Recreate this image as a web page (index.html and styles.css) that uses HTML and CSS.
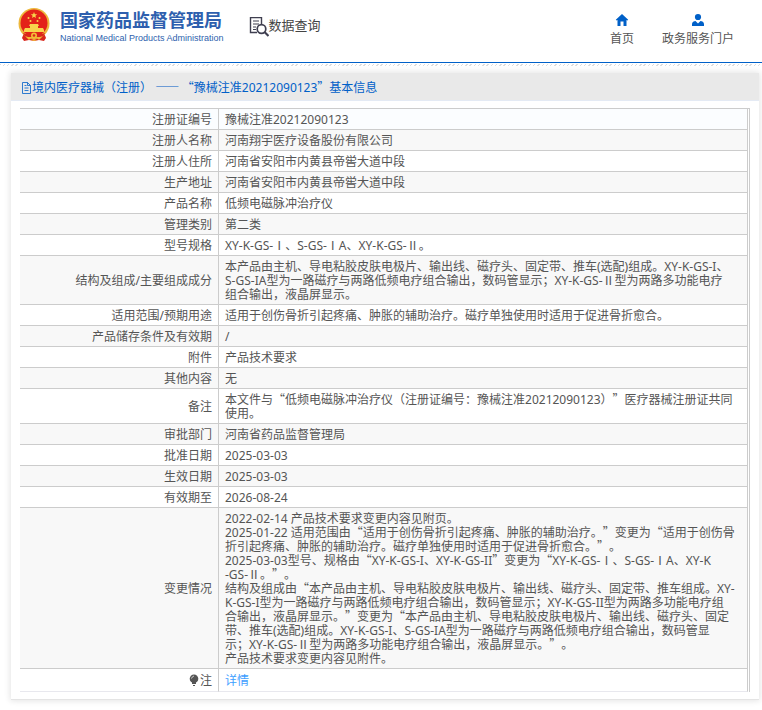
FILE: index.html
```html
<!DOCTYPE html>
<html lang="zh-CN">
<head>
<meta charset="utf-8">
<meta name="viewport" content="width=device-width, initial-scale=1">
<title>国家药品监督管理局 数据查询</title>
<link rel="stylesheet" href="styles.css">
</head>
<body>
<header class="site-header">
  <a class="brand" href="#">
    <svg class="emblem" viewBox="0 0 32 34" aria-hidden="true">
      <path d="M6 25 4 30l2 3 5-1 5 1 5-1 5 1 2-3-2-5z" fill="#d9271c"/>
      <circle cx="16" cy="15.500" r="15.500" fill="#edb83c"/>
      <circle cx="16" cy="15" r="13.500" fill="#e32119"/>
      <path d="m16 4 .9 2.200 2.300.1-1.800 1.500.6 2.300-2-1.300-2 1.300.6-2.300-1.800-1.500 2.300-.1z" fill="#f8d44c"/>
      <circle cx="10.500" cy="10" r="1" fill="#f8d44c"/><circle cx="21.500" cy="10" r="1" fill="#f8d44c"/>
      <circle cx="12.500" cy="13" r="1" fill="#f8d44c"/><circle cx="19.500" cy="13" r="1" fill="#f8d44c"/>
      <path d="M12 16h8l1 2h-1v2h5l1 2v2H6v-2l1-2h5v-2h-1z" fill="#f8d44c"/>
      <path d="M5 25c7 2 15 2 22 0l-2 4H7z" fill="#d9271c"/>
      <circle cx="16" cy="27.500" r="3" fill="#f4bd36"/><circle cx="16" cy="27.500" r="1.300" fill="#d9271c"/>
      <path d="m7 28 6 2-2 2zm18 0-6 2 2 2zM13 32l3-1 3 1-3 1z" fill="#f4bd36"/>
    </svg>
    <span class="brand-text">
      <span class="brand-cn">国家药品监督管理局</span>
      <span class="brand-en">National Medical Products Administration</span>
    </span>
  </a>
  <a class="section" href="#">
    <svg class="search-icon" viewBox="0 0 20 20" fill="none" stroke="#3f3f50" aria-hidden="true">
      <path d="M8 15.500H1.500v-15h11V7" stroke-width="1.400"/>
      <path d="M4 4h6M4 7h6M4 10h3M4 12.500h3" stroke-width="1.100"/>
      <circle cx="12.500" cy="12" r="4.300" stroke-width="1.700"/>
      <path d="m15.500 15 4 4" stroke-width="2.200"/>
    </svg>
    <span>数据查询</span>
  </a>
  <nav class="nav">
    <a href="#">
      <svg viewBox="0 0 14 14" aria-hidden="true"><path d="M7 1 .8 6.800l.8.800.9-.6V13H5.500V8.500h3V13h3V7l.9.600.8-.800z" fill="#0060c8"/></svg>
      <span>首页</span>
    </a>
    <a href="#">
      <svg viewBox="0 0 14 14" aria-hidden="true"><circle cx="7" cy="4" r="3.100" fill="#0060c8"/><path d="M1 13v-2c0-2 2-3 3.500-3L7 10.500 9.500 8C11 8 13 9 13 11v2z" fill="#0060c8"/></svg>
      <span>政务服务门户</span>
    </a>
  </nav>
</header>
<main class="card">
  <h1 class="card-title">
    <svg viewBox="0 0 11 12" fill="none" stroke="#0060c8" stroke-width=".8" aria-hidden="true"><path d="M1.500.5h5l3 3v8h-8zM6.500.5v3h3M3.500 3.500h2M3.500 6h4M3.500 8.500h4"/></svg>
    <span>境内医疗器械（注册） <b>—— “</b>豫械注准20212090123<b>”</b>基本信息</span>
  </h1>
  <div class="card-body">
    <table class="info">
      <tbody>
        <tr><th scope="row">注册证编号</th><td>豫械注准20212090123</td></tr>
        <tr><th scope="row">注册人名称</th><td>河南翔宇医疗设备股份有限公司</td></tr>
        <tr><th scope="row">注册人住所</th><td>河南省安阳市内黄县帝喾大道中段</td></tr>
        <tr><th scope="row">生产地址</th><td>河南省安阳市内黄县帝喾大道中段</td></tr>
        <tr><th scope="row">产品名称</th><td>低频电磁脉冲治疗仪</td></tr>
        <tr><th scope="row">管理类别</th><td>第二类</td></tr>
        <tr><th scope="row">型号规格</th><td>XY-K-GS-<b>Ⅰ</b>、S-GS-<b>Ⅰ</b>A、XY-K-GS-<b>Ⅱ</b>。</td></tr>
        <tr><th scope="row">结构及组成/主要组成成分</th><td>本产品由主机、导电粘胶皮肤电极片、输出线、磁疗头、固定带、推车(选配)组成。XY-K-GS-I、<br>S-GS-IA型为一路磁疗与两路低频电疗组合输出，数码管显示；XY-K-GS-<b>Ⅱ</b>型为两路多功能电疗<br>组合输出，液晶屏显示。</td></tr>
        <tr><th scope="row">适用范围/预期用途</th><td>适用于创伤骨折引起疼痛、肿胀的辅助治疗。磁疗单独使用时适用于促进骨折愈合。</td></tr>
        <tr><th scope="row">产品储存条件及有效期</th><td>/</td></tr>
        <tr><th scope="row">附件</th><td>产品技术要求</td></tr>
        <tr><th scope="row">其他内容</th><td>无</td></tr>
        <tr><th scope="row">备注</th><td>本文件与<b>“</b>低频电磁脉冲治疗仪（注册证编号：豫械注准20212090123）<b>”</b>医疗器械注册证共同<br>使用。</td></tr>
        <tr><th scope="row">审批部门</th><td>河南省药品监督管理局</td></tr>
        <tr><th scope="row">批准日期</th><td>2025-03-03</td></tr>
        <tr><th scope="row">生效日期</th><td>2025-03-03</td></tr>
        <tr><th scope="row">有效期至</th><td>2026-08-24</td></tr>
        <tr><th scope="row">变更情况</th><td>2022-02-14 产品技术要求变更内容见附页。<br>2025-01-22 适用范围由<b>“</b>适用于创伤骨折引起疼痛、肿胀的辅助治疗。<b>”</b>变更为<b>“</b>适用于创伤骨<br>折引起疼痛、肿胀的辅助治疗。磁疗单独使用时适用于促进骨折愈合。<b>”</b>。<br>2025-03-03型号、规格由<b>“</b>XY-K-GS-I、XY-K-GS-II<b>”</b>变更为<b>“</b>XY-K-GS-<b>Ⅰ</b>、S-GS-<b>Ⅰ</b>A、XY-K<br>-GS-<b>Ⅱ</b>。<b>”</b>。<br>结构及组成由<b>“</b>本产品由主机、导电粘胶皮肤电极片、输出线、磁疗头、固定带、推车组成。XY-<br>K-GS-I型为一路磁疗与两路低频电疗组合输出，数码管显示；XY-K-GS-II型为两路多功能电疗组<br>合输出，液晶屏显示。<b>”</b>变更为<b>“</b>本产品由主机、导电粘胶皮肤电极片、输出线、磁疗头、固定<br>带、推车(选配)组成。XY-K-GS-I、S-GS-IA型为一路磁疗与两路低频电疗组合输出，数码管显<br>示；XY-K-GS-<b>Ⅱ</b>型为两路多功能电疗组合输出，液晶屏显示。<b>”</b>。<br>产品技术要求变更内容见附件。</td></tr>
        <tr class="note"><th scope="row"><svg viewBox="0 0 10 12" aria-hidden="true"><circle cx="5" cy="4.800" r="4.300" fill="#555"/><path d="M3 8h4v2H3zM4 11h2v1H4z" fill="#555"/><path d="M2.500 4.500Q3 2.500 5 2" fill="none" stroke="#ccc"/></svg>注</th><td><a href="#">详情</a></td></tr>
      </tbody>
    </table>
  </div>
</main>
</body>
</html>
```
FILE: styles.css
```css
* {
  box-sizing: border-box;
}

body {
  margin: 0;
  background: #fff;
  color: #555;
  font-family: "Noto Sans", "Noto Sans CJK SC", sans-serif;
  font-size: 12px;
  line-height: 14px;
  text-spacing-trim: space-all;
}

a {
  color: inherit;
  text-decoration: none;
}

/* full-width quotation marks, dashes and numerals */
b {
  font-family: "Noto Sans CJK SC", sans-serif;
  font-weight: 400;
  line-height: 0;
}

.site-header {
  display: flex;
  align-items: flex-start;
  height: 66px;
  padding: 8px 28px 0 18px;
  background:
    linear-gradient(#0060c8, #0060c8) 0 62px / 100% 1px no-repeat,
    repeating-linear-gradient(135deg, #ddd 0 1px, #fff 1px 3px) 0 64px / 100% 2px no-repeat;
}

.brand {
  display: flex;
  gap: 10px;
}

.emblem {
  width: 32px;
  height: 34px;
}

.brand-text {
  display: flex;
  flex-direction: column;
  color: #2e5fae;
  white-space: nowrap;
}

.brand-cn {
  font-size: 18px;
  font-weight: 700;
  line-height: 24px;
}

.brand-en {
  font-family: "Liberation Sans", sans-serif;
  font-size: 9px;
  line-height: 12px;
}

.section {
  display: flex;
  align-items: flex-start;
  margin: 9px 0 0 25px;
  color: #444;
  font-size: 13px;
  line-height: 16px;
  white-space: nowrap;
}

.search-icon {
  width: 20px;
  height: 20px;
}

.nav {
  display: flex;
  gap: 28px;
  margin: 5px 0 0 auto;
  white-space: nowrap;
}

.nav a {
  display: flex;
  flex-direction: column;
  align-items: center;
  gap: 5px;
}

.nav svg {
  width: 14px;
  height: 14px;
}

.card {
  margin: 7px 3px 10px 11px;
  border-bottom: 1px solid #e4e4e4;
  box-shadow: 0 0 6px 1px #e4e4e4;
  background: #fff;
}

.card-title {
  display: flex;
  align-items: center;
  height: 28px;
  margin: 0;
  padding: 2px 10px 0;
  border-bottom: 1px solid #e4eaf4;
  background: #e9e9e9;
  color: #0060c8;
  font-size: 12px;
  font-weight: 400;
}

.card-title svg {
  width: 11px;
  height: 12px;
}

.card-body {
  padding: 7px 9px 7px;
}

.info {
  width: 100%;
  border-collapse: separate;
  border-spacing: 0;
  border-top: 1px solid #ccc;
  border-right: 1px solid #ccc;
  padding-right: 1px;
}

.info th,
.info td {
  height: 21px;
  padding: 4px 0 2px 6px;
  border-right: 1px solid #ccc;
  border-bottom: 1px solid #ccc;
  font-weight: 400;
  text-align: left;
  vertical-align: middle;
}

.info th {
  width: 199px;
  padding-right: 6px;
  text-align: right;
}

.info td {
  white-space: nowrap;
}

.info tr:nth-child(even) {
  background: #f8f8f8;
}

.info tr:first-child {
  background: #fbfdff;
}

.info .note th,
.info .note td {
  height: 23px;
  border-bottom-color: #e8e8ee;
}

.note svg {
  width: 10px;
  height: 12px;
  margin-right: 1px;
  vertical-align: -1px;
}

.note a {
  color: #409eff;
}
```
